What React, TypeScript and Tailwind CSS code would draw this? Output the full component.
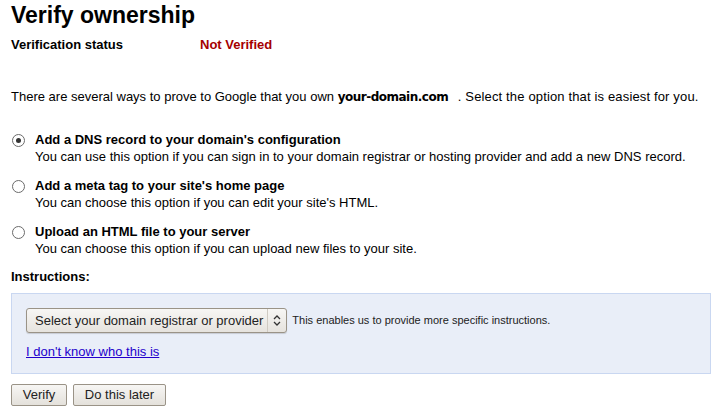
import { useState } from "react";

const options = [
  {
    id: "dns",
    title: "Add a DNS record to your domain's configuration",
    desc: "You can use this option if you can sign in to your domain registrar or hosting provider and add a new DNS record.",
  },
  {
    id: "meta",
    title: "Add a meta tag to your site's home page",
    desc: "You can choose this option if you can edit your site's HTML.",
  },
  {
    id: "html",
    title: "Upload an HTML file to your server",
    desc: "You can choose this option if you can upload new files to your site.",
  },
];

function Radio({ checked }: { checked: boolean }) {
  return (
    <span className="mt-[3px] flex h-[13px] w-[13px] shrink-0 items-center justify-center rounded-full border border-[#6b6b6b] bg-white">
      {checked && <span className="h-[5px] w-[5px] rounded-full bg-[#333]" />}
    </span>
  );
}

export default function App() {
  const [selected, setSelected] = useState("dns");

  return (
    <div className="h-[413px] w-[711px] overflow-hidden bg-white pl-[11px] font-['Liberation_Sans',Arial,sans-serif] text-[13px] text-black">
      <h1 className="pt-[1px] text-[23px] font-bold leading-[28px]">Verify ownership</h1>

      <div className="mt-[8px] flex font-bold leading-[16px]">
        <span className="w-[189px]">Verification status</span>
        <span className="text-[#a50000]">Not Verified</span>
      </div>

      <p className="mt-[36px] leading-[16px]">
        There are several ways to prove to Google that you own{" "}
        <span className="mr-[6px] font-['DejaVu_Sans',sans-serif] text-[12px] font-bold tracking-[-0.5px]">
          your-domain.com
        </span>{" "}
        <span className="tracking-[0.15px]">. Select the option that is easiest for you.</span>
      </p>

      <div className="mt-[26px] flex flex-col gap-[12px]">
        {options.map((o) => (
          <label
            key={o.id}
            className="flex cursor-pointer gap-[10px] pl-[1px]"
            onClick={() => setSelected(o.id)}
          >
            <Radio checked={selected === o.id} />
            <span className="flex flex-col leading-[17px]">
              <span className="font-bold">{o.title}</span>
              <span>{o.desc}</span>
            </span>
          </label>
        ))}
      </div>

      <div className="mt-[12px] font-bold leading-[16px]">Instructions:</div>

      <div className="mt-[8px] h-[81px] border border-[#c9d7f1] bg-[#e9eef8] px-[14px] pt-[14px]">
        <div className="flex items-center gap-[5px]">
          <div className="flex h-[25px] items-center rounded-[3px] border border-[#9a9387] bg-gradient-to-b from-[#f7f6f4] to-[#e6e3de] shadow-[0_1px_1px_rgba(0,0,0,0.15)]">
            <span className="pl-[8px] pr-[4px] text-[13px] text-[#222]">Select your domain registrar or provider</span>
            <span className="flex h-full w-[19px] items-center justify-center border-l border-[#cfcac2]">
              <svg width="8" height="11" viewBox="0 0 8 11" fill="none" stroke="#333" strokeWidth="1.3">
                <path d="M1 4 L4 1 L7 4" />
                <path d="M1 7 L4 10 L7 7" />
              </svg>
            </span>
          </div>
          <span className="text-[11px] text-[#222]">This enables us to provide more specific instructions.</span>
        </div>
        <a href="#" className="mt-[11px] inline-block text-[13px] leading-[16px] text-[#2200cc] underline">
          I don't know who this is
        </a>
      </div>

      <div className="mt-[10px] flex gap-[6px]">
        <button className="h-[22px] w-[56px] rounded-[2px] border border-[#9a9387] bg-gradient-to-b from-[#f7f6f4] to-[#e4e1db] text-[13px] text-[#222]">
          Verify
        </button>
        <button className="h-[22px] w-[93px] rounded-[2px] border border-[#9a9387] bg-gradient-to-b from-[#f7f6f4] to-[#e4e1db] text-[13px] text-[#222]">
          Do this later
        </button>
      </div>
    </div>
  );
}
